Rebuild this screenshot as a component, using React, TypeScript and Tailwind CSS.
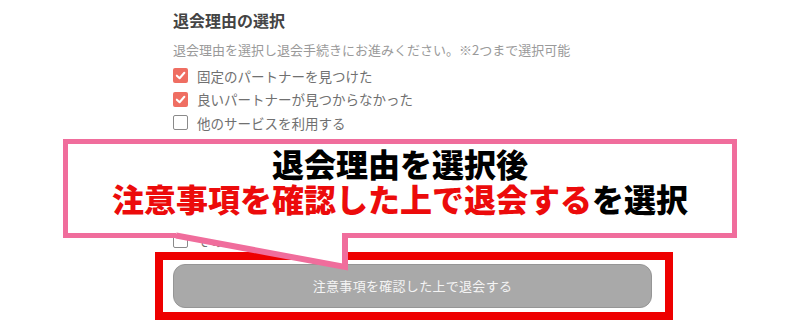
const reasons = [
  { label: "固定のパートナーを見つけた", checked: true },
  { label: "良いパートナーが見つからなかった", checked: true },
  { label: "他のサービスを利用する", checked: false },
  { label: "料金が高い", checked: false },
  { label: "使い方がわかりにくい", checked: false },
  { label: "忙しくて利用する時間がない", checked: false },
  { label: "しばらく利用を休みたい", checked: false },
  { label: "その他", checked: false },
];

function Checkbox({ checked }: { checked: boolean }) {
  if (checked) {
    return (
      <span className="w-[15px] h-[15px] shrink-0 rounded-[2px] bg-[#ef6e62] flex items-center justify-center">
        <svg width="11" height="11" viewBox="0 0 12 12" fill="none">
          <path d="M2 6.2 L5 9 L10.2 3" stroke="#fff" strokeWidth="2.2" strokeLinecap="round" strokeLinejoin="round" />
        </svg>
      </span>
    );
  }
  return <span className="w-[15px] h-[15px] shrink-0 rounded-[2px] border-[1.5px] border-[#8a8a8a] bg-white" />;
}

function Callout() {
  return (
    <>
      <div className="absolute left-[63px] top-[139px] w-[674px] h-[99px] border-[5px] border-[#f06d9c] bg-white flex flex-col items-center pt-[2px] text-[32px] leading-[35px] font-black">
        <div className="text-black">退会理由を選択後</div>
        <div>
          <span className="text-[#ec0b0b]">注意事項を確認した上で退会する</span>
          <span className="text-black">を選択</span>
        </div>
      </div>
      {/* tail of the speech bubble */}
      <svg className="absolute left-[170px] top-[228px]" width="185" height="45" viewBox="170 228 185 45">
        <polygon points="176,231 345,231 345,267 176,234" fill="#fff" />
        <polyline
          points="176,235.5 345,267 345,233"
          fill="none"
          stroke="#f06d9c"
          strokeWidth="6"
          strokeLinejoin="miter"
        />
      </svg>
    </>
  );
}

export default function App() {
  return (
    <div
      className="relative w-[800px] h-[329px] bg-white overflow-hidden"
      style={{ fontFamily: '"Noto Sans CJK JP", "Noto Sans", sans-serif' }}
    >
      <div className="pl-[173px] pt-[8px] w-[652px]">
        <h2 className="text-[16px] leading-[24px] font-bold text-[#444]">退会理由の選択</h2>
        <p className="mt-[8px] text-[13px] leading-[20px] text-[#9a9a9a]">
          退会理由を選択し退会手続きにお進みください。※2つまで選択可能
        </p>
        <ul className="mt-[4px]">
          {reasons.map((r) => (
            <li key={r.label} className="h-[23.5px] flex items-center gap-[9px]">
              <Checkbox checked={r.checked} />
              <span className="text-[13.5px] text-[#707070]">{r.label}</span>
            </li>
          ))}
        </ul>
        <button className="mt-[12px] w-[479px] h-[44px] rounded-[12px] bg-[#a9a9a9] border border-[#969696] text-[13px] tracking-[0.3px] text-[#f4f4f4]">
          注意事項を確認した上で退会する
        </button>
      </div>

      <div className="absolute left-[155px] top-[252px] w-[518px] h-[68px] border-[8px] border-[#ee0000]" />
      <Callout />
    </div>
  );
}
